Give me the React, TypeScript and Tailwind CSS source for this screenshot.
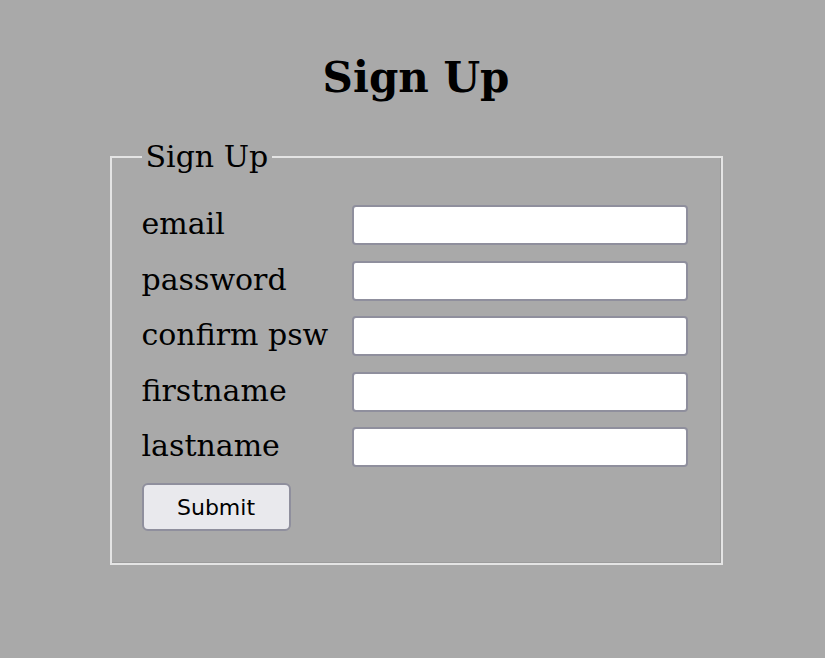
const fields = ["email", "password", "confirm psw", "firstname", "lastname"];

export default function App() {
  return (
    <div className="min-h-[658px] bg-[#a9a9a9] pl-[7px] text-black [font-family:'DejaVu_Serif',serif]">
      <h1 className="pt-[53px] text-center text-[42px] font-bold leading-[49px]">Sign Up</h1>

      <fieldset className="mx-auto mt-[37px] w-[613px] border-2 border-[#e4e4e4] px-[30px] pb-[32px] shadow-[inset_-1px_-1px_0_#9c9c9c]">
        <legend className="px-[4px] text-[30px] leading-[35px]">Sign Up</legend>

        <div className="mt-[31px] flex flex-col gap-[15.5px]">
          {fields.map((f) => (
            <div key={f} className="flex h-[40px] items-center">
              <label className="mb-[3px] w-[210px] text-[30px] leading-[35px]">{f}</label>
              <input
                type="text"
                className="h-[40px] w-[336px] rounded-[4px] border-2 border-[#8f8f9d] bg-white px-2 outline-none"
              />
            </div>
          ))}
        </div>

        <button className="mt-[16px] h-[48px] w-[149px] rounded-[6px] border-2 border-[#8f8f9d] bg-[#e9e9ed] text-[22px] [font-family:'DejaVu_Sans',sans-serif]">
          Submit
        </button>
      </fieldset>
    </div>
  );
}
